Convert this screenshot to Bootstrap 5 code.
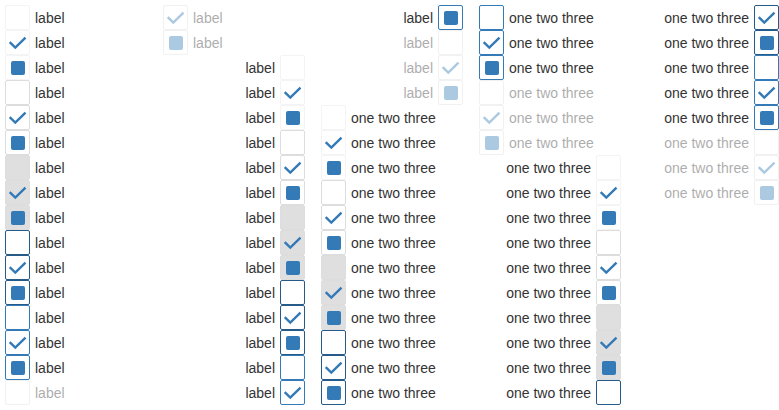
<!DOCTYPE html>
<html lang="en">
<head>
<meta charset="utf-8">
<meta name="viewport" content="width=device-width, initial-scale=1">
<title>Checkbox states</title>
<link href="https://cdn.jsdelivr.net/npm/bootstrap@5.3.0/dist/css/bootstrap.min.css" rel="stylesheet">
<style>
  body { font-family: "Liberation Sans", Arial, sans-serif; font-size: 14px; color: #333; }
  .state-sheet { height: calc(100vh - 10px); margin: 5px 0 5px 5px; columns: 5; column-gap: 16px; column-fill: auto; }
  .tick-row { gap: 5px; break-inside: avoid; }
  .tick-row label { padding-top: 2px; line-height: 23px; }
  .tick-row.is-disabled { opacity: .4; }
  .tick-box {
    appearance: none; flex: none; width: 25px; height: 25px; margin: 0;
    border: 1px solid #f4f4f4; border-radius: 2px;
    background: #fff center / 25px 25px no-repeat border-box;
  }
  .tick-box:checked { background-image: url("data:image/svg+xml,%3Csvg xmlns='http://www.w3.org/2000/svg' viewBox='0 0 25 25'%3E%3Cpath d='M4.7 12.1 10.3 17.6 20.5 7.7' fill='none' stroke='%23337ab7' stroke-width='2.4'/%3E%3C/svg%3E"); }
  .tick-box:indeterminate { background-image: url("data:image/svg+xml,%3Csvg xmlns='http://www.w3.org/2000/svg' viewBox='0 0 25 25'%3E%3Crect x='6' y='6' width='14' height='14' rx='2' fill='%23337ab7'/%3E%3C/svg%3E"); }
  .tick-hover, .tick-box:disabled { border-color: #ddd; }
  .tick-active { border-color: #ddd; background-color: #dfdfdf; }
  .tick-focus-hover { border-color: #265a88; }
  .tick-focus { border-color: #337ab7; }
</style>
</head>
<body>
<main class="state-sheet" id="sheet"></main>
<script src="https://cdn.jsdelivr.net/npm/bootstrap@5.3.0/dist/js/bootstrap.bundle.min.js"></script>
<script>
  const groups = [
    { text: 'label', reverse: false },
    { text: 'label', reverse: true },
    { text: 'one two three', reverse: false },
    { text: 'one two three', reverse: true }
  ];
  const states = ['normal', 'hover', 'active', 'focus-hover', 'focus', 'disabled'];
  const values = ['off', 'on', 'mixed'];
  const sheet = document.getElementById('sheet');

  groups.forEach((group, g) => states.forEach(state => values.forEach(value => {
    const row = document.createElement('div');
    row.className = 'tick-row d-flex align-items-center' + (group.reverse ? ' flex-row-reverse' : '');
    if (state === 'disabled') row.classList.add('is-disabled');

    const box = document.createElement('input');
    box.type = 'checkbox';
    box.id = `tick-${g}-${state}-${value}`;
    box.className = `tick-box tick-${state}`;
    box.checked = value === 'on';
    box.indeterminate = value === 'mixed';
    box.disabled = state === 'disabled';

    const label = document.createElement('label');
    label.htmlFor = box.id;
    label.textContent = group.text;

    row.append(box, label);
    sheet.append(row);
  })));
</script>
</body>
</html>
